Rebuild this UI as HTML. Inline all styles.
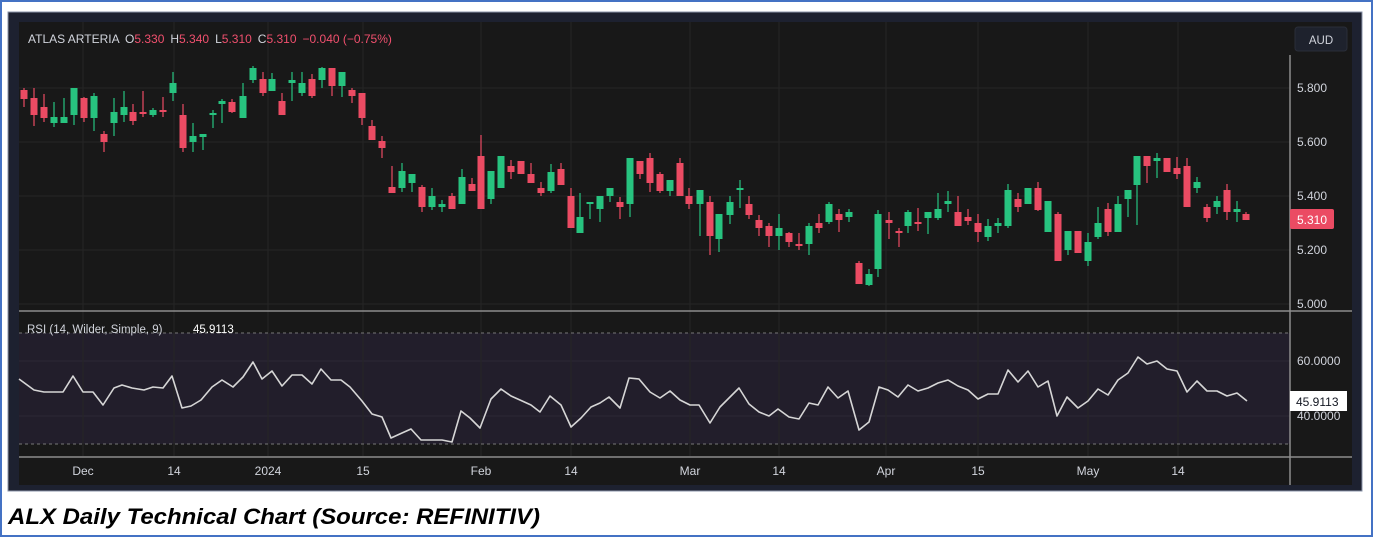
<!DOCTYPE html>
<html><head><meta charset="utf-8">
<style>
html,body{margin:0;padding:0;background:#fff;}
body{width:1373px;height:537px;overflow:hidden;position:relative;font-family:"Liberation Sans",sans-serif;}
</style></head>
<body>
<svg id="s" width="1373" height="537" xmlns="http://www.w3.org/2000/svg" style="position:absolute;left:0;top:0">
<rect x="1" y="1" width="1371" height="535" fill="#fff" stroke="#4472c4" stroke-width="2"/>
<rect x="8" y="12" width="1354" height="479" fill="#1d2130" stroke="#8a93a8" stroke-width="1"/>
<rect x="19" y="22" width="1333" height="463" fill="#181818"/>
<!-- RSI band -->
<rect x="19" y="333" width="1271" height="111" fill="#221e2b"/>
<g stroke="#262626" stroke-width="1">
<line x1="19" y1="88" x2="1290" y2="88"/><line x1="19" y1="142" x2="1290" y2="142"/><line x1="19" y1="196" x2="1290" y2="196"/><line x1="19" y1="250" x2="1290" y2="250"/><line x1="19" y1="304" x2="1290" y2="304"/>
<line x1="19" y1="361" x2="1290" y2="361" stroke="#2c2836"/><line x1="19" y1="416" x2="1290" y2="416" stroke="#2c2836"/>
<line x1="83" y1="22" x2="83" y2="456"/><line x1="174" y1="22" x2="174" y2="456"/><line x1="268" y1="22" x2="268" y2="456"/><line x1="363" y1="22" x2="363" y2="456"/><line x1="481" y1="22" x2="481" y2="456"/><line x1="571" y1="22" x2="571" y2="456"/><line x1="690" y1="22" x2="690" y2="456"/><line x1="779" y1="22" x2="779" y2="456"/><line x1="886" y1="22" x2="886" y2="456"/><line x1="978" y1="22" x2="978" y2="456"/><line x1="1088" y1="22" x2="1088" y2="456"/><line x1="1178" y1="22" x2="1178" y2="456"/>
</g>
<g stroke="#777" stroke-width="1" stroke-dasharray="3 3"><line x1="19" y1="333" x2="1290" y2="333"/><line x1="19" y1="444" x2="1290" y2="444"/></g>
<g stroke="#8c8c8c" stroke-width="1.5"><line x1="19" y1="311" x2="1352" y2="311"/><line x1="19" y1="457" x2="1352" y2="457"/><line x1="1290" y1="55" x2="1290" y2="485"/></g>
<g id="c"></g>
<polyline id="rsi" fill="none" stroke="#d6d6d6" stroke-width="1.6" stroke-linejoin="round" points="19,379 34,390 44,392 63,392 73,376 83,392 93,392 103,405 114,388 122,385 132,388 144,390 153,387 163,388 172,376 182,408 191,406 201,400 212,387 222,380 233,387 243,377 253,362 262,379 272,371 282,386 292,375 302,375 312,384 321,369 331,380 341,380 350,387 362,401 372,414 382,417 391,438 402,433 411,429 421,440 442,440 452,442 461,411 470,418 480,428 491,399 501,389 511,396 520,400 531,405 540,412 550,396 561,405 571,427 581,418 591,407 600,403 609,397 620,408 629,378 639,379 650,392 660,398 670,391 680,400 690,405 699,405 710,423 720,407 729,398 739,388 749,404 759,412 769,416 778,409 789,417 799,419 809,403 818,405 828,387 838,398 848,391 859,430 869,422 879,387 888,390 898,397 908,385 918,391 928,388 938,383 948,380 958,386 968,390 978,399 988,394 998,394 1008,370 1018,382 1028,371 1038,387 1048,381 1057,416 1067,397 1078,408 1088,401 1098,389 1108,395 1118,380 1128,373 1138,357 1147,364 1157,361 1167,369 1177,371 1187,392 1197,381 1207,391 1217,391 1227,396 1237,393 1247,401"/>
<g font-family="Liberation Sans,sans-serif" font-size="12" fill="#d1d4dc">
<text x="28" y="43" fill="#d1d4dc">ATLAS ARTERIA</text>
<text x="125" y="43"><tspan fill="#d1d4dc">O</tspan><tspan fill="#f0506e">5.330</tspan><tspan dx="6" fill="#d1d4dc">H</tspan><tspan fill="#f0506e">5.340</tspan><tspan dx="6" fill="#d1d4dc">L</tspan><tspan fill="#f0506e">5.310</tspan><tspan dx="6" fill="#d1d4dc">C</tspan><tspan fill="#f0506e">5.310</tspan><tspan dx="6" fill="#f0506e">−0.040 (−0.75%)</tspan></text>
<text x="27" y="333" font-size="11.5">RSI (14, Wilder, Simple, 9)</text>
<text x="193" y="333" font-size="11.5" fill="#fff">45.9113</text>
<text x="1297" y="92">5.800</text><text x="1297" y="146">5.600</text><text x="1297" y="200">5.400</text><text x="1297" y="254">5.200</text><text x="1297" y="308">5.000</text>
<text x="1297" y="365">60.0000</text><text x="1297" y="420">40.0000</text>
<g text-anchor="middle"><text x="83" y="475">Dec</text><text x="174" y="475">14</text><text x="268" y="475">2024</text><text x="363" y="475">15</text><text x="481" y="475">Feb</text><text x="571" y="475">14</text><text x="690" y="475">Mar</text><text x="779" y="475">14</text><text x="886" y="475">Apr</text><text x="978" y="475">15</text><text x="1088" y="475">May</text><text x="1178" y="475">14</text></g>
</g>
<rect x="1295" y="27" width="52" height="24" rx="3" fill="#1e222d" stroke="#2a2e39"/>
<text x="1321" y="44" text-anchor="middle" font-family="Liberation Sans,sans-serif" font-size="11.5" fill="#d1d4dc">AUD</text>
<rect x="1290" y="209" width="44" height="20" rx="2" fill="#eb4b63"/>
<text x="1297" y="224" font-family="Liberation Sans,sans-serif" font-size="12" fill="#fff">5.310</text>
<rect x="1290" y="391" width="57" height="20" fill="#fff"/>
<text x="1296" y="406" font-family="Liberation Sans,sans-serif" font-size="12" fill="#131722">45.9113</text>
<text x="8" y="524" font-family="Liberation Sans,sans-serif" font-weight="bold" font-style="italic" font-size="22" fill="#000" textLength="532" lengthAdjust="spacingAndGlyphs">ALX Daily Technical Chart (Source: REFINITIV)</text>
</svg>
<script>
var d=[
[24,90,99,88,107,0],[34,98,115,88,126,0],[44,107,118,94,122,0],[54,117,123,102,127,1],[64,117,123,98,123,1],[74,88,115,88,125,1],[84,98,118,97,122,0],[94,96,118,93,131,1],[104,134,142,131,152,0],[114,112,123,98,136,1],[124,107,115,91,122,1],[133,112,121,104,125,0],[143,112,114,91,117,0],[153,110,115,108,117,1],[163,110,112,97,117,0],[173,83,93,72,101,1],[183,115,148,104,152,0],[193,136,142,123,152,1],[203,134,137,134,150,1],[213,113,115,110,128,1],[222,101,104,99,123,1],[232,102,112,99,113,0],[243,96,118,83,118,1],[253,68,80,66,83,1],[263,79,93,72,96,0],[272,79,91,73,91,1],[282,101,115,93,115,0],[292,80,83,72,101,1],[302,83,93,72,96,1],[312,79,96,74,98,0],[322,68,80,67,88,1],[332,68,86,68,96,0],[342,72,86,72,97,1],[352,90,96,88,103,0],[362,93,118,93,125,0],[372,126,140,120,140,0],[382,141,148,136,158,0],[392,187,193,166,193,0],[402,171,188,163,192,1],[412,174,183,174,192,1],[422,187,207,185,212,0],[432,196,207,188,210,1],[442,204,207,200,212,1],[452,196,209,193,209,0],
[462,177,204,169,204,1],[472,184,191,178,191,0],[481,156,209,135,209,0],[491,171,199,171,204,1],[501,156,188,156,188,1],[511,166,172,160,179,0],[521,161,174,161,174,0],[531,174,183,163,183,0],[541,188,193,182,196,0],[551,172,191,164,193,1],[561,169,185,163,185,0],[571,196,228,188,228,0],[580,217,233,193,233,1],[590,202,204,202,219,1],[600,196,209,196,222,1],[610,188,196,188,202,1],[620,202,207,197,219,0],[630,158,204,158,217,1],[640,161,174,161,179,0],[650,158,183,153,192,0],[660,174,191,172,193,0],[670,180,191,180,196,1],[680,163,196,158,196,0],[689,196,204,188,209,0],[700,190,204,190,236,1],[710,202,236,196,255,0],[719,214,239,214,252,1],[730,202,215,196,224,1],[740,188,190,180,208,1],[749,204,215,196,219,0],[759,220,228,215,236,0],[769,226,236,223,247,0],[779,228,236,214,250,1],[789,233,242,232,247,0],[799,244,245,233,250,0],[809,226,244,223,255,1],[819,223,228,214,233,0],[829,204,222,202,224,1],[839,214,220,209,232,0],[849,212,217,209,222,1],[859,263,284,261,284,0],[869,274,285,269,286,1],
[878,214,269,210,277,1],[889,220,223,212,239,0],[899,231,233,228,247,0],[908,212,226,210,233,1],[918,222,223,208,231,0],[928,212,218,212,234,1],[938,209,218,193,220,1],[948,201,204,191,212,1],[958,212,226,196,226,0],[968,217,221,209,225,0],[978,223,232,214,242,0],[988,226,237,219,241,1],[998,223,226,218,233,1],[1008,190,226,184,228,1],[1018,199,207,193,212,0],[1028,188,204,188,204,1],[1038,188,210,182,211,0],[1048,201,232,201,232,1],[1058,214,261,212,261,0],[1068,231,250,231,255,1],[1078,231,253,231,253,0],[1088,242,261,233,266,1],[1098,223,237,207,239,1],[1108,209,232,203,236,0],[1118,204,232,196,232,1],[1128,190,199,190,217,1],[1137,156,185,156,225,1],[1147,156,166,156,183,0],[1157,158,161,153,178,1],[1167,158,172,158,172,0],[1177,168,174,157,179,0],[1187,166,207,158,207,0],[1197,182,188,177,193,1],[1207,207,218,204,222,0],[1217,201,207,196,214,1],[1227,190,212,184,220,0],[1237,209,212,201,222,1],[1246,214,220,212,220,0]];
var h='';
d.forEach(function(c){var col=c[5]?'#27c37f':'#eb4b63';var x=c[0],t=c[1],b=Math.max(c[2],c[1]+2);
h+='<line x1="'+x+'" y1="'+c[3]+'" x2="'+x+'" y2="'+Math.max(c[4],b)+'" stroke="'+col+'" stroke-width="1.2"/>';
h+='<rect x="'+(x-3.5)+'" y="'+t+'" width="7" height="'+(b-t)+'" fill="'+col+'"/>';});
document.getElementById('c').innerHTML=h;
</script>
</body></html>
